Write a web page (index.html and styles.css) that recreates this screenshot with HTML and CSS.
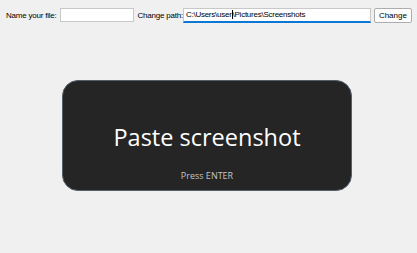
FILE: index.html
```html
<!DOCTYPE html>
<html lang="en">
<head>
  <meta charset="UTF-8" />
  <title>Screenshot saver</title>
  <link rel="stylesheet" href="styles.css">
</head>
<body>
  <div class="toolbar">
    <label class="field-label" for="fileName">Name your file:</label>
    <input type="text" id="fileName" class="name-input" />
    <label class="field-label path-label" for="savePath">Change path:</label>
    <div class="path-input">
      <span>C:\Users\user</span><span class="caret"></span><span>\Pictures\Screenshots</span>
    </div>
    <button class="change-btn">Change</button>
  </div>

  <div class="drop-zone">
    <div class="drop-title">Paste screenshot</div>
    <div class="drop-hint">Press ENTER</div>
  </div>
</body>
</html>
```

FILE: styles.css
```css
* {
  box-sizing: border-box;
}

body {
  margin: 0;
  background: #f0f0f0;
  font-family: 'Liberation Sans', Arial, sans-serif;
  color: #000;
}

.toolbar {
  display: flex;
  align-items: center;
  padding: 5px 0 0 6px;
  height: 25px;
}

.toolbar > * {
  flex-shrink: 0;
  white-space: nowrap;
}

.field-label {
  font-size: 8px;
  letter-spacing: -0.22px;
  margin-right: 3px;
}

.path-label {
  margin-left: 4px;
  margin-right: 0;
}

.name-input {
  width: 74px;
  height: 14px;
  border: 1px solid #c8c8c8;
  background: #fff;
  padding: 0;
  outline: none;
}

.path-input {
  width: 188px;
  height: 15px;
  border: 1px solid #c8c8c8;
  border-bottom: 2px solid #0a78d4;
  background: #fff;
  font-size: 8px;
  letter-spacing: -0.25px;
  display: flex;
  align-items: center;
  padding-left: 2px;
}

.caret {
  display: inline-block;
  width: 1px;
  height: 9px;
  background: #000;
}

.change-btn {
  margin-left: 3px;
  width: 38px;
  height: 15px;
  padding: 0;
  font-family: 'Liberation Sans', Arial, sans-serif;
  font-size: 8px;
  background: #fdfdfd;
  border: 1px solid #adadad;
  border-radius: 2px;
}

.drop-zone {
  width: 290px;
  height: 111px;
  margin: 55px 0 0 62px;
  background: #252525;
  border: 1px solid #55606c;
  border-radius: 16px;
  display: flex;
  flex-direction: column;
  align-items: center;
  color: #fff;
  font-family: 'Open Sans', 'Noto Sans', sans-serif;
}

.drop-title {
  font-size: 23.5px;
  margin-top: 40px;
  line-height: 32px;
}

.drop-hint {
  font-size: 9px;
  color: #c4c4c4;
  margin-top: 16px;
}
```
